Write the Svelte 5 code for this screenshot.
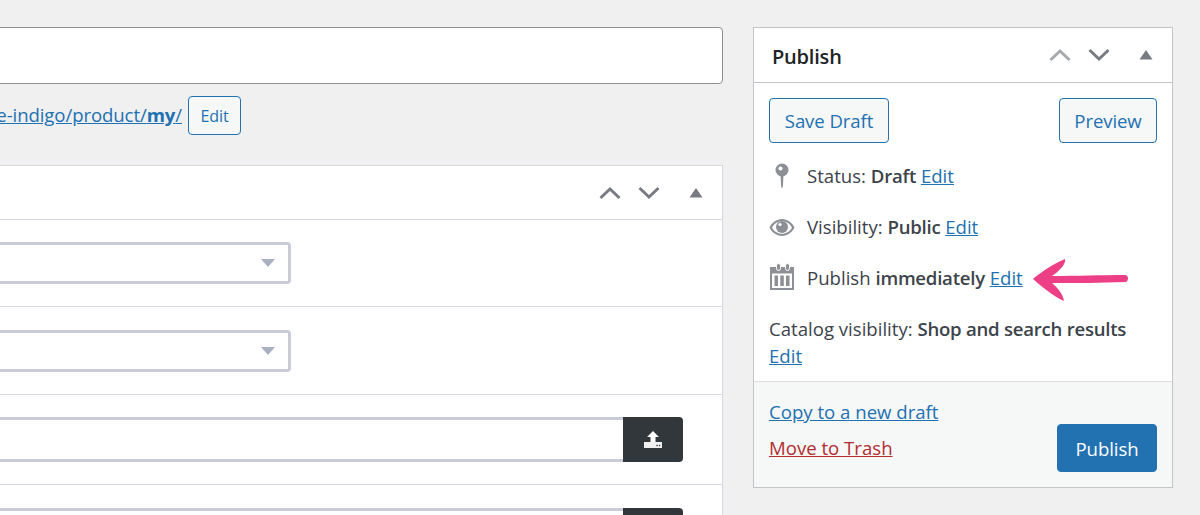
<script>
  const selects = [1, 2];
  const uploads = [1, 2];
</script>

<div class="page">
  <div class="main">
    <div class="title-input"></div>
    <div class="permalink">
      <a href="#p">e-indigo/product/<b>my</b>/</a>
      <button class="btn small">Edit</button>
    </div>

    <section class="box">
      <div class="box-head">
        <svg class="handle" width="22" height="14" viewBox="0 0 22 14"><path d="M1.500 12 11 3l9.500 9" /></svg>
        <svg class="handle" width="22" height="14" viewBox="0 0 22 14"><path d="M1.500 2 11 11l9.500-9" /></svg>
        <svg class="toggle" width="14" height="10" viewBox="0 0 14 10"><path d="M7 0l6.500 9.500H.5z" /></svg>
      </div>
      {#each selects as s}
        <div class="field select-row">
          <div class="select"><span class="caret"></span></div>
        </div>
      {/each}
      {#each uploads as u}
        <div class="field upload-row">
          <div class="text-input"></div>
          <div class="upload-btn">
            <svg width="20" height="20" viewBox="0 0 20 20">
              <path d="M10 1l6 6h-3.500v6h-5V7H4z" fill="#fff" />
              <rect x="1" y="12" width="18" height="6" fill="#f0f0f1" />
              <circle cx="14" cy="15.500" r=".8" fill="#32373c" />
              <circle cx="16.500" cy="15.500" r=".8" fill="#32373c" />
            </svg>
          </div>
        </div>
      {/each}
    </section>
  </div>

  <aside class="publish">
    <div class="publish-head">
      <h2>Publish</h2>
      <svg class="handle faded" width="22" height="14" viewBox="0 0 22 14"><path d="M1.500 12 11 3l9.500 9" /></svg>
      <svg class="handle" width="22" height="14" viewBox="0 0 22 14"><path d="M1.500 2 11 11l9.500-9" /></svg>
      <svg class="toggle" width="14" height="10" viewBox="0 0 14 10"><path d="M7 0l6.500 9.500H.5z" /></svg>
    </div>

    <div class="publish-body">
      <div class="actions">
        <button class="btn">Save Draft</button>
        <button class="btn">Preview</button>
      </div>

      <div class="row status">
        <svg class="ico" width="26" height="26" viewBox="0 0 26 26">
          <circle cx="13" cy="7" r="6.500" fill="#8c8f94" />
          <circle cx="11.500" cy="5.500" r="2" fill="#fff" />
          <path d="M11.500 12h3l-.7 12.500h-1.600z" fill="#8c8f94" />
        </svg>
        <span>Status: <b>Draft</b> <a href="#e">Edit</a></span>
      </div>
      <div class="row vis">
        <svg class="ico" width="26" height="26" viewBox="0 0 26 26">
          <path d="M13 5C7.500 5 2.800 8.600.5 13.500 2.800 18.400 7.500 22 13 22s10.200-3.600 12.500-8.500C23.200 8.600 18.500 5 13 5zm0 2.200c4.300 0 8 2.400 10 6.300-2 3.900-5.700 6.300-10 6.300S5 17.400 3 13.500c2-3.900 5.700-6.300 10-6.300z" fill="#8c8f94" />
          <circle cx="13" cy="13" r="6" fill="#8c8f94" />
          <circle cx="11" cy="10.500" r="1.600" fill="#fff" />
        </svg>
        <span>Visibility: <b>Public</b> <a href="#e">Edit</a></span>
      </div>
      <div class="row cal">
        <svg class="ico" width="26" height="26" viewBox="0 0 26 26">
          <path d="M1 2h24v23H1z" fill="#8c8f94" />
          <path d="M3 8.500h20v14.500H3z" fill="#fff" />
          <rect x="7.500" y="-1.500" width="4" height="7" rx="2" fill="#8c8f94" stroke="#fff" stroke-width="1" />
          <rect x="16.500" y="-1.500" width="4" height="7" rx="2" fill="#8c8f94" stroke="#fff" stroke-width="1" />
          <path d="M5.500 10.500h3.500v10.500H5.500zM11.300 10.500h3.500v10.500h-3.500zM17 10.500h3.500v10.500H17z" fill="#8c8f94" />
        </svg>
        <span>Publish <b>immediately</b> <a href="#e">Edit</a></span>
      </div>
      <div class="row catalog">
        <span>Catalog visibility: <b>Shop and search results</b><br /><a href="#e">Edit</a></span>
      </div>

      <svg class="arrow" width="96" height="42" viewBox="0 0 96 42">
        <path d="M0 20C8 13 20 5 32 0c1 4-3 10-13 17 24 0 50-1 73-1 4 0 4 7 0 7-24 1-50 1-73 1 7 6 11 12 12 18C20 37 8 27 0 20z" fill="#ec3f85" />
      </svg>
    </div>

    <div class="publish-foot">
      <div class="links">
        <a href="#c">Copy to a new draft</a>
        <a href="#t" class="trash">Move to Trash</a>
      </div>
      <button class="btn primary">Publish</button>
    </div>
  </aside>
</div>

<style>
  :global(body) {
    margin: 0;
    background: #f0f0f1;
  }

  .page {
    display: flex;
    height: 515px;
    overflow: hidden;
    padding-top: 27px;
    box-sizing: border-box;
    font-family: "Open Sans", "Noto Sans", sans-serif;
    font-size: 18.600px;
    letter-spacing: 0;
    color: #3c434a;
  }

  .main {
    flex: none;
    width: 743px;
    margin-left: -20px;
  }

  .title-input {
    height: 57px;
    box-sizing: border-box;
    background: #fff;
    border: 1px solid #8c8f94;
    border-radius: 4px;
  }

  .permalink {
    display: flex;
    justify-content: flex-end;
    align-items: center;
    gap: 6px;
    height: 39px;
    margin-top: 12px;
    padding-right: 482px;
  }

  a {
    color: #2271b1;
    text-decoration: underline;
  }

  .permalink a {
    white-space: nowrap;
    position: relative;
    top: -1px;
    letter-spacing: -0.1px;
  }

  .btn {
    font: inherit;
    letter-spacing: -0.1px;
    color: #2271b1;
    background: #f6f7f7;
    border: 1px solid #2271b1;
    border-radius: 4px;
    padding: 0;
    height: 45px;
  }

  .btn.small {
    flex: none;
    width: 53px;
    height: 39px;
    font-size: 16px;
  }

  .box {
    margin-top: 30px;
    height: 360px;
    background: #fff;
    border: 1px solid #d5d8df;
    border-bottom: 0;
  }

  .box-head {
    display: flex;
    justify-content: flex-end;
    align-items: center;
    gap: 17px;
    height: 53px;
    padding-right: 19px;
    border-bottom: 1px solid #d5d8df;
  }

  .box-head .toggle {
    margin-left: 12px;
  }

  .handle path {
    fill: none;
    stroke: #787c82;
    stroke-width: 3;
  }

  .handle.faded path {
    stroke: #a7aaad;
  }

  .toggle path {
    fill: #787c82;
  }

  .field {
    border-bottom: 1px solid #d5d8df;
    box-sizing: border-box;
  }

  .select-row {
    height: 87px;
    padding-top: 22px;
    padding-right: 431px;
  }

  .select-row + .select-row {
    height: 88px;
    padding-top: 23px;
  }

  .select {
    position: relative;
    height: 42px;
    box-sizing: border-box;
    border: 3px solid #c8ccd6;
    border-left: 0;
    border-radius: 0 4px 4px 0;
    background: #fff;
  }

  .caret {
    position: absolute;
    right: 13px;
    top: 14px;
    border: 7px solid transparent;
    border-top: 8px solid #a9b0bf;
    border-bottom: 0;
  }

  .upload-row {
    display: flex;
    height: 90px;
    padding-top: 22px;
    padding-right: 39px;
  }

  .upload-row + .upload-row {
    padding-top: 23px;
  }

  .text-input {
    flex: 1;
    height: 45px;
    box-sizing: border-box;
    border-top: 3px solid #c8ccd6;
    border-bottom: 3px solid #c8ccd6;
  }

  .upload-btn {
    flex: none;
    display: flex;
    align-items: center;
    justify-content: center;
    width: 60px;
    height: 45px;
    background: #32373c;
    border-radius: 0 4px 4px 0;
  }

  .publish {
    flex: none;
    display: flex;
    flex-direction: column;
    width: 420px;
    height: 461px;
    margin-left: 30px;
    box-sizing: border-box;
    background: #fff;
    border: 1px solid #c3c4c7;
  }

  .publish-head {
    display: flex;
    align-items: center;
    gap: 17px;
    height: 54px;
    flex: none;
    padding: 0 19px 0 18px;
    border-bottom: 1px solid #c3c4c7;
  }

  .publish-head .toggle {
    margin-left: 12px;
  }

  h2 {
    flex: 1;
    margin: 2px 0 0;
    font-size: 20px;
    font-weight: 600;
    letter-spacing: -0.2px;
    color: #1d2327;
  }

  .publish-body {
    position: relative;
    flex: 1;
    padding: 15px 15px 0;
  }

  .actions {
    display: flex;
    justify-content: space-between;
    margin-bottom: 19px;
  }

  .actions .btn:first-child {
    width: 120px;
  }

  .actions .btn:last-child {
    width: 98px;
  }

  .row {
    display: flex;
    align-items: center;
    height: 27px;
    margin-bottom: 24px;
    white-space: nowrap;
  }

  .row b {
    font-weight: 600;
    letter-spacing: -0.25px;
  }

  .ico {
    flex: none;
    width: 26px;
    margin-right: 12px;
    overflow: visible;
  }

  .catalog {
    height: 54px;
    line-height: 27px;
    margin: 0;
  }

  .arrow {
    position: absolute;
    left: 279px;
    top: 176px;
  }

  .publish-foot {
    flex: none;
    display: flex;
    justify-content: space-between;
    align-items: flex-end;
    height: 106px;
    box-sizing: border-box;
    padding: 0 15px 15px;
    background: #f6f7f7;
    border-top: 1px solid #dcdcde;
  }

  .links {
    display: flex;
    flex-direction: column;
    gap: 11px;
    padding-bottom: 12px;
  }

  .trash {
    color: #b32d2e;
  }

  .btn.primary {
    width: 100px;
    height: 48px;
    color: #fff;
    background: #2271b1;
  }
</style>
